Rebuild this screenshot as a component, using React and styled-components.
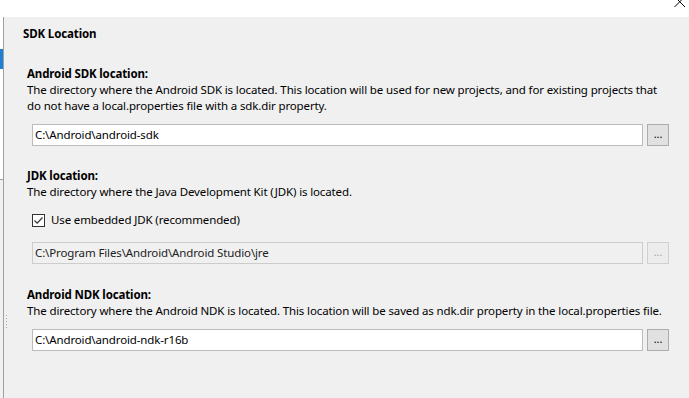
import React from 'react';
import styled, { createGlobalStyle } from 'styled-components';

const GlobalStyle = createGlobalStyle`
  html, body {
    margin: 0;
    padding: 0;
    height: 100%;
    overflow: hidden;
    background: #f0f0f0;
  }
  #root {
    height: 100%;
  }
  body {
    font-family: "Noto Sans", "Open Sans", sans-serif;
    font-size: 11.5px;
    letter-spacing: -0.13px;
    color: #000;
  }
`

function App() {
  return (
    <>
      <GlobalStyle />
      <Window>
        <TitleBar>
          <CloseIcon width="12" height="8" viewBox="0 0 12 8">
            <path d="M0.5 -3.5 L11 7 M11 -3.5 L0.5 7" stroke="#000" strokeWidth="1" fill="none" />
          </CloseIcon>
        </TitleBar>
        <Body>
          <Sidebar>
            <TreePane>
              <Selected />
            </TreePane>
            <LowerPane />
          </Sidebar>
          <Content>
            <Grip />
            <PageTitle>SDK Location</PageTitle>

            <Section>
              <Label>Android SDK location:</Label>
              <Desc>
                The directory where the Android SDK is located. This location will be used for new projects, and for existing projects that
                <br />
                do not have a local.properties file with a sdk.dir property.
              </Desc>
              <PathRow>
                <PathInput>C:\Android\android-sdk</PathInput>
                <BrowseBtn>...</BrowseBtn>
              </PathRow>
            </Section>

            <Section gap={22}>
              <Label>JDK location:</Label>
              <Desc>The directory where the Java Development Kit (JDK) is located.</Desc>
              <CheckRow>
                <CheckBox>
                  <svg width="11" height="11" viewBox="0 0 11 11">
                    <path d="M1.5 5.5 L4.2 8.2 L9.5 2.5" stroke="#333" strokeWidth="1.2" fill="none" />
                  </svg>
                </CheckBox>
                Use embedded JDK (recommended)
              </CheckRow>
              <PathRow top={14}>
                <PathInput disabled>C:\Program Files\Android\Android Studio\jre</PathInput>
                <BrowseBtn disabled>...</BrowseBtn>
              </PathRow>
            </Section>

            <Section gap={23}>
              <Label>Android NDK location:</Label>
              <Desc>The directory where the Android NDK is located. This location will be saved as ndk.dir property in the local.properties file.</Desc>
              <PathRow top={10}>
                <PathInput>C:\Android\android-ndk-r16b</PathInput>
                <BrowseBtn>...</BrowseBtn>
              </PathRow>
            </Section>
          </Content>
        </Body>
      </Window>
    </>
  );
}

export default App;

const Window = styled.div`
  display: flex;
  flex-direction: column;
  height: 100%;
`
const TitleBar = styled.div`
  height: 17px;
  background: #fff;
  display: flex;
  justify-content: flex-end;
  align-items: flex-start;
  padding-right: 3px;
  flex-shrink: 0;
`
const CloseIcon = styled.svg`
  display: block;
`
const Body = styled.div`
  flex: 1;
  display: flex;
  min-height: 0;
`
const Sidebar = styled.div`
  width: 3px;
  flex-shrink: 0;
  border-right: 1px solid #a0a0a0;
  display: flex;
  flex-direction: column;
`
const TreePane = styled.div`
  height: 163px;
  background: #fff;
  border-bottom: 1px solid #a0a0a0;
  padding-top: 32px;
  box-sizing: border-box;
`
const Selected = styled.div`
  height: 20px;
  background: #1f7fd0;
`
const LowerPane = styled.div`
  flex: 1;
  background: #f0f0f0;
`
const Content = styled.div`
  position: relative;
  flex: 1;
  padding-top: 9px;
`
const Grip = styled.div`
  position: absolute;
  left: 1px;
  top: 297px;
  width: 3px;
  height: 16px;
  background-image: radial-gradient(circle, #a8a8a8 0.6px, transparent 0.8px);
  background-size: 3px 3px;
`
const PageTitle = styled.div`
  margin-left: 19px;
  line-height: 16px;
  font-weight: bold;
`
const Section = styled.div`
  margin-left: 23px;
  margin-top: ${p => p.gap || 24}px;
`
const Label = styled.div`
  font-weight: bold;
  line-height: 16px;
`
const Desc = styled.div`
  line-height: 16px;
  white-space: nowrap;
`
const PathRow = styled.div`
  display: flex;
  gap: 4px;
  margin-top: ${p => p.top || 10}px;
  margin-left: 5px;
`
const PathInput = styled.div`
  width: 611px;
  height: 22px;
  box-sizing: border-box;
  border: 1px solid ${p => p.disabled ? '#cccccc' : '#bcbcbc'};
  background: ${p => p.disabled ? '#f0f0f0' : '#fff'};
  color: ${p => p.disabled ? '#222' : '#000'};
  padding-left: 2px;
  line-height: 20px;
  white-space: nowrap;
`
const BrowseBtn = styled.div`
  width: 22px;
  height: 22px;
  box-sizing: border-box;
  border: 1px solid ${p => p.disabled ? '#d0d0d0' : '#adadad'};
  background: ${p => p.disabled ? '#ececec' : '#e1e1e1'};
  color: ${p => p.disabled ? '#a8a8a8' : '#000'};
  text-align: center;
  line-height: 18px;
  font-size: 11px;
`
const CheckRow = styled.div`
  display: flex;
  align-items: center;
  gap: 6px;
  margin-top: 12px;
  margin-left: 5px;
  line-height: 16px;
`
const CheckBox = styled.div`
  width: 13px;
  height: 13px;
  box-sizing: border-box;
  border: 1px solid #333;
  background: #fff;
  display: flex;
  align-items: center;
  justify-content: center;
`
